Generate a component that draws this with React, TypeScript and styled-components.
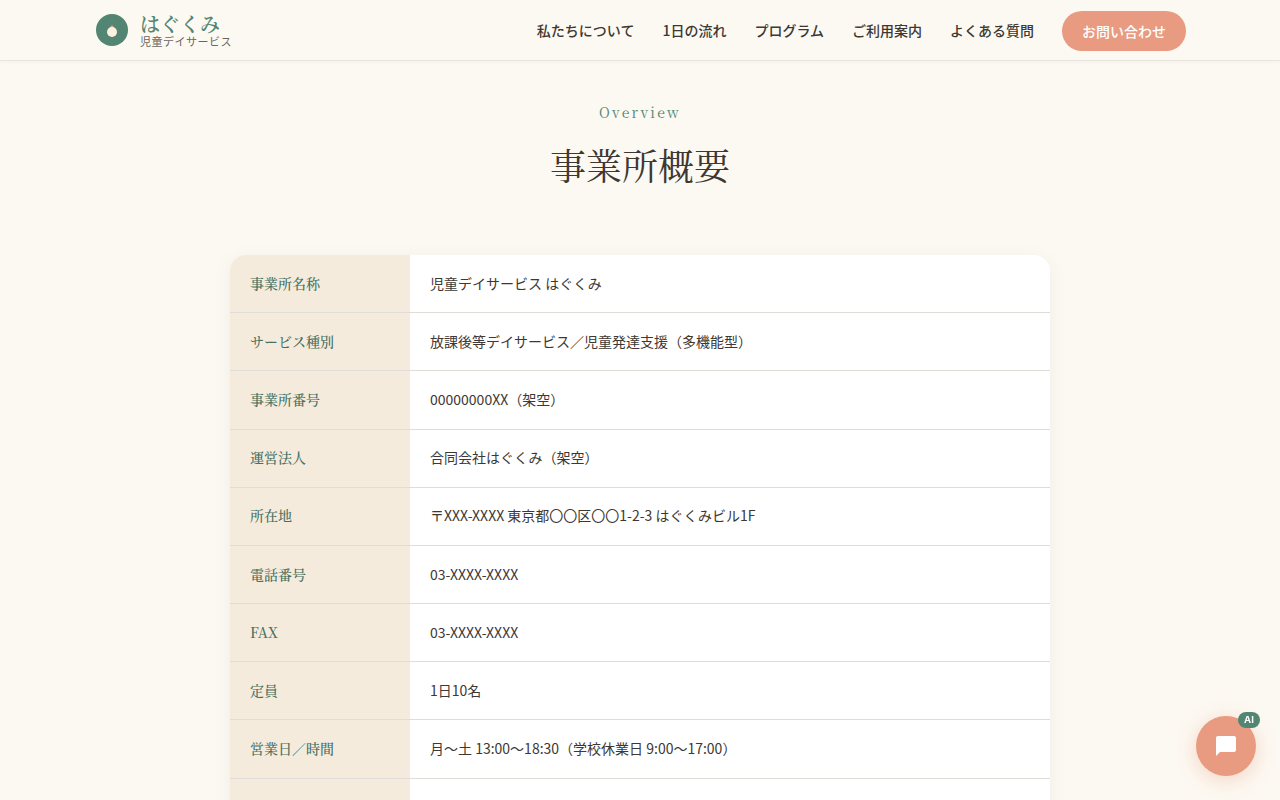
import React from "react";
import styled, { createGlobalStyle } from "styled-components";

const sans = `"Noto Sans CJK JP", "Noto Sans", sans-serif`;
const serif = `"Noto Serif CJK JP", "Noto Serif JP", "Liberation Serif", "Noto Sans CJK JP", serif`;

const GlobalStyle = createGlobalStyle`
  html, body {
    margin: 0;
    padding: 0;
    background: #fcf9f2;
    color: #3d3833;
    font-family: ${sans};
  }
  * { box-sizing: border-box; }
`;

const Header = styled.header`
  height: 61px;
  background: #fcf9f2;
  border-bottom: 1px solid #e8e4de;
  box-shadow: 0 1px 4px rgba(0, 0, 0, 0.04);
`;

const HeaderInner = styled.div`
  width: 1120px;
  height: 60px;
  margin: 0 auto;
  padding: 0 14px 0 16px;
  display: flex;
  align-items: center;
  justify-content: space-between;
`;

const Brand = styled.div`
  display: flex;
  align-items: center;
  gap: 12px;
`;

const BrandText = styled.div`
  display: flex;
  flex-direction: column;
  padding-bottom: 2px;
`;

const BrandName = styled.span`
  font-family: ${serif};
  font-size: 20px;
  font-weight: 600;
  line-height: 23px;
  color: #528672;
`;

const BrandSub = styled.span`
  font-size: 11px;
  line-height: 12px;
  letter-spacing: 0.5px;
  color: #6b6560;
`;

const Nav = styled.nav`
  display: flex;
  align-items: center;
  gap: 28px;
`;

const NavLink = styled.a`
  font-size: 14px;
  font-weight: 500;
  color: #3d3833;
`;

const ContactButton = styled.a`
  width: 124px;
  height: 40px;
  margin-top: 2px;
  border-radius: 20px;
  background: #e89b80;
  color: #fff;
  font-size: 14px;
  font-weight: 500;
  display: flex;
  align-items: center;
  justify-content: center;
`;

const Section = styled.main`
  padding-top: 39px;
`;

const Eyebrow = styled.p`
  margin: 0;
  text-align: center;
  font-family: ${serif};
  font-size: 14px;
  line-height: 24px;
  letter-spacing: 2.25px;
  color: #528672;
`;

const Title = styled.h1`
  margin: 14px 0 0;
  text-align: center;
  font-family: ${serif};
  font-size: 36px;
  line-height: 54px;
  font-weight: 400;
  color: #3d3833;
`;

const Card = styled.div`
  width: 820px;
  margin: 63px auto 0;
  border-radius: 16px;
  overflow: hidden;
  background: #fff;
  box-shadow: 0 4px 20px rgba(0, 0, 0, 0.05);
`;

const Row = styled.div`
  display: grid;
  grid-template-columns: 180px 1fr;
  min-height: 58.18px;
  border-bottom: 1px solid #e0ddd8;
`;

const Label = styled.div`
  padding: 15.8px 20px 16.2px;
  background: #f5ebdd;
  font-family: ${serif};
  font-size: 14px;
  font-weight: 500;
  line-height: 25.18px;
  color: #456f5e;
`;

const Value = styled.div`
  padding: 15.8px 20px 16.2px;
  font-size: 14px;
  line-height: 25.18px;
  color: #3d3833;
`;

const ChatButton = styled.button`
  position: fixed;
  right: 24px;
  bottom: 24px;
  width: 60px;
  height: 60px;
  border: 0;
  padding: 0;
  border-radius: 50%;
  background: #e89b80;
  box-shadow: 0 4px 20px rgba(232, 155, 128, 0.4);
  display: flex;
  align-items: center;
  justify-content: center;
`;

const AiBadge = styled.span`
  position: absolute;
  top: -4px;
  right: -4px;
  width: 22px;
  height: 16px;
  border-radius: 8px;
  background: #528672;
  color: #fff;
  font-family: "Inter", sans-serif;
  font-size: 9.5px;
  font-weight: 700;
  line-height: 16px;
  text-align: center;
`;

const rows: [string, string][] = [
  ["事業所名称", "児童デイサービス はぐくみ"],
  ["サービス種別", "放課後等デイサービス／児童発達支援（多機能型）"],
  ["事業所番号", "00000000XX（架空）"],
  ["運営法人", "合同会社はぐくみ（架空）"],
  ["所在地", "〒XXX-XXXX 東京都〇〇区〇〇1-2-3 はぐくみビル1F"],
  ["電話番号", "03-XXXX-XXXX"],
  ["FAX", "03-XXXX-XXXX"],
  ["定員", "1日10名"],
  ["営業日／時間", "月〜土 13:00〜18:30（学校休業日 9:00〜17:00）"],
  ["", ""],
];

const navItems = ["私たちについて", "1日の流れ", "プログラム", "ご利用案内", "よくある質問"];

function LogoMark() {
  return (
    <svg width="32" height="32" viewBox="0 0 32 32" aria-hidden="true">
      <circle cx="16" cy="16" r="16" fill="#528672" />
      <path d="M12.5 15 16 11l3.5 4z" fill="#d6a691" />
      <circle cx="16" cy="18" r="5" fill="#fcf1e0" />
    </svg>
  );
}

export default function App() {
  return (
    <>
      <GlobalStyle />
      <Header>
        <HeaderInner>
          <Brand>
            <LogoMark />
            <BrandText>
              <BrandName>はぐくみ</BrandName>
              <BrandSub>児童デイサービス</BrandSub>
            </BrandText>
          </Brand>
          <Nav>
            {navItems.map((item) => (
              <NavLink key={item}>{item}</NavLink>
            ))}
            <ContactButton>お問い合わせ</ContactButton>
          </Nav>
        </HeaderInner>
      </Header>
      <Section>
        <Eyebrow>Overview</Eyebrow>
        <Title>事業所概要</Title>
        <Card>
          {rows.map(([label, value], i) => (
            <Row key={i}>
              <Label>{label}</Label>
              <Value>{value}</Value>
            </Row>
          ))}
        </Card>
      </Section>
      <ChatButton aria-label="AI chat">
        <svg width="24" height="24" viewBox="0 0 24 24" aria-hidden="true">
          <path
            d="M20 2H4c-1.1 0-2 .9-2 2v18l4-4h14c1.1 0 2-.9 2-2V4c0-1.1-.9-2-2-2z"
            fill="#fff"
          />
        </svg>
        <AiBadge>AI</AiBadge>
      </ChatButton>
    </>
  );
}
